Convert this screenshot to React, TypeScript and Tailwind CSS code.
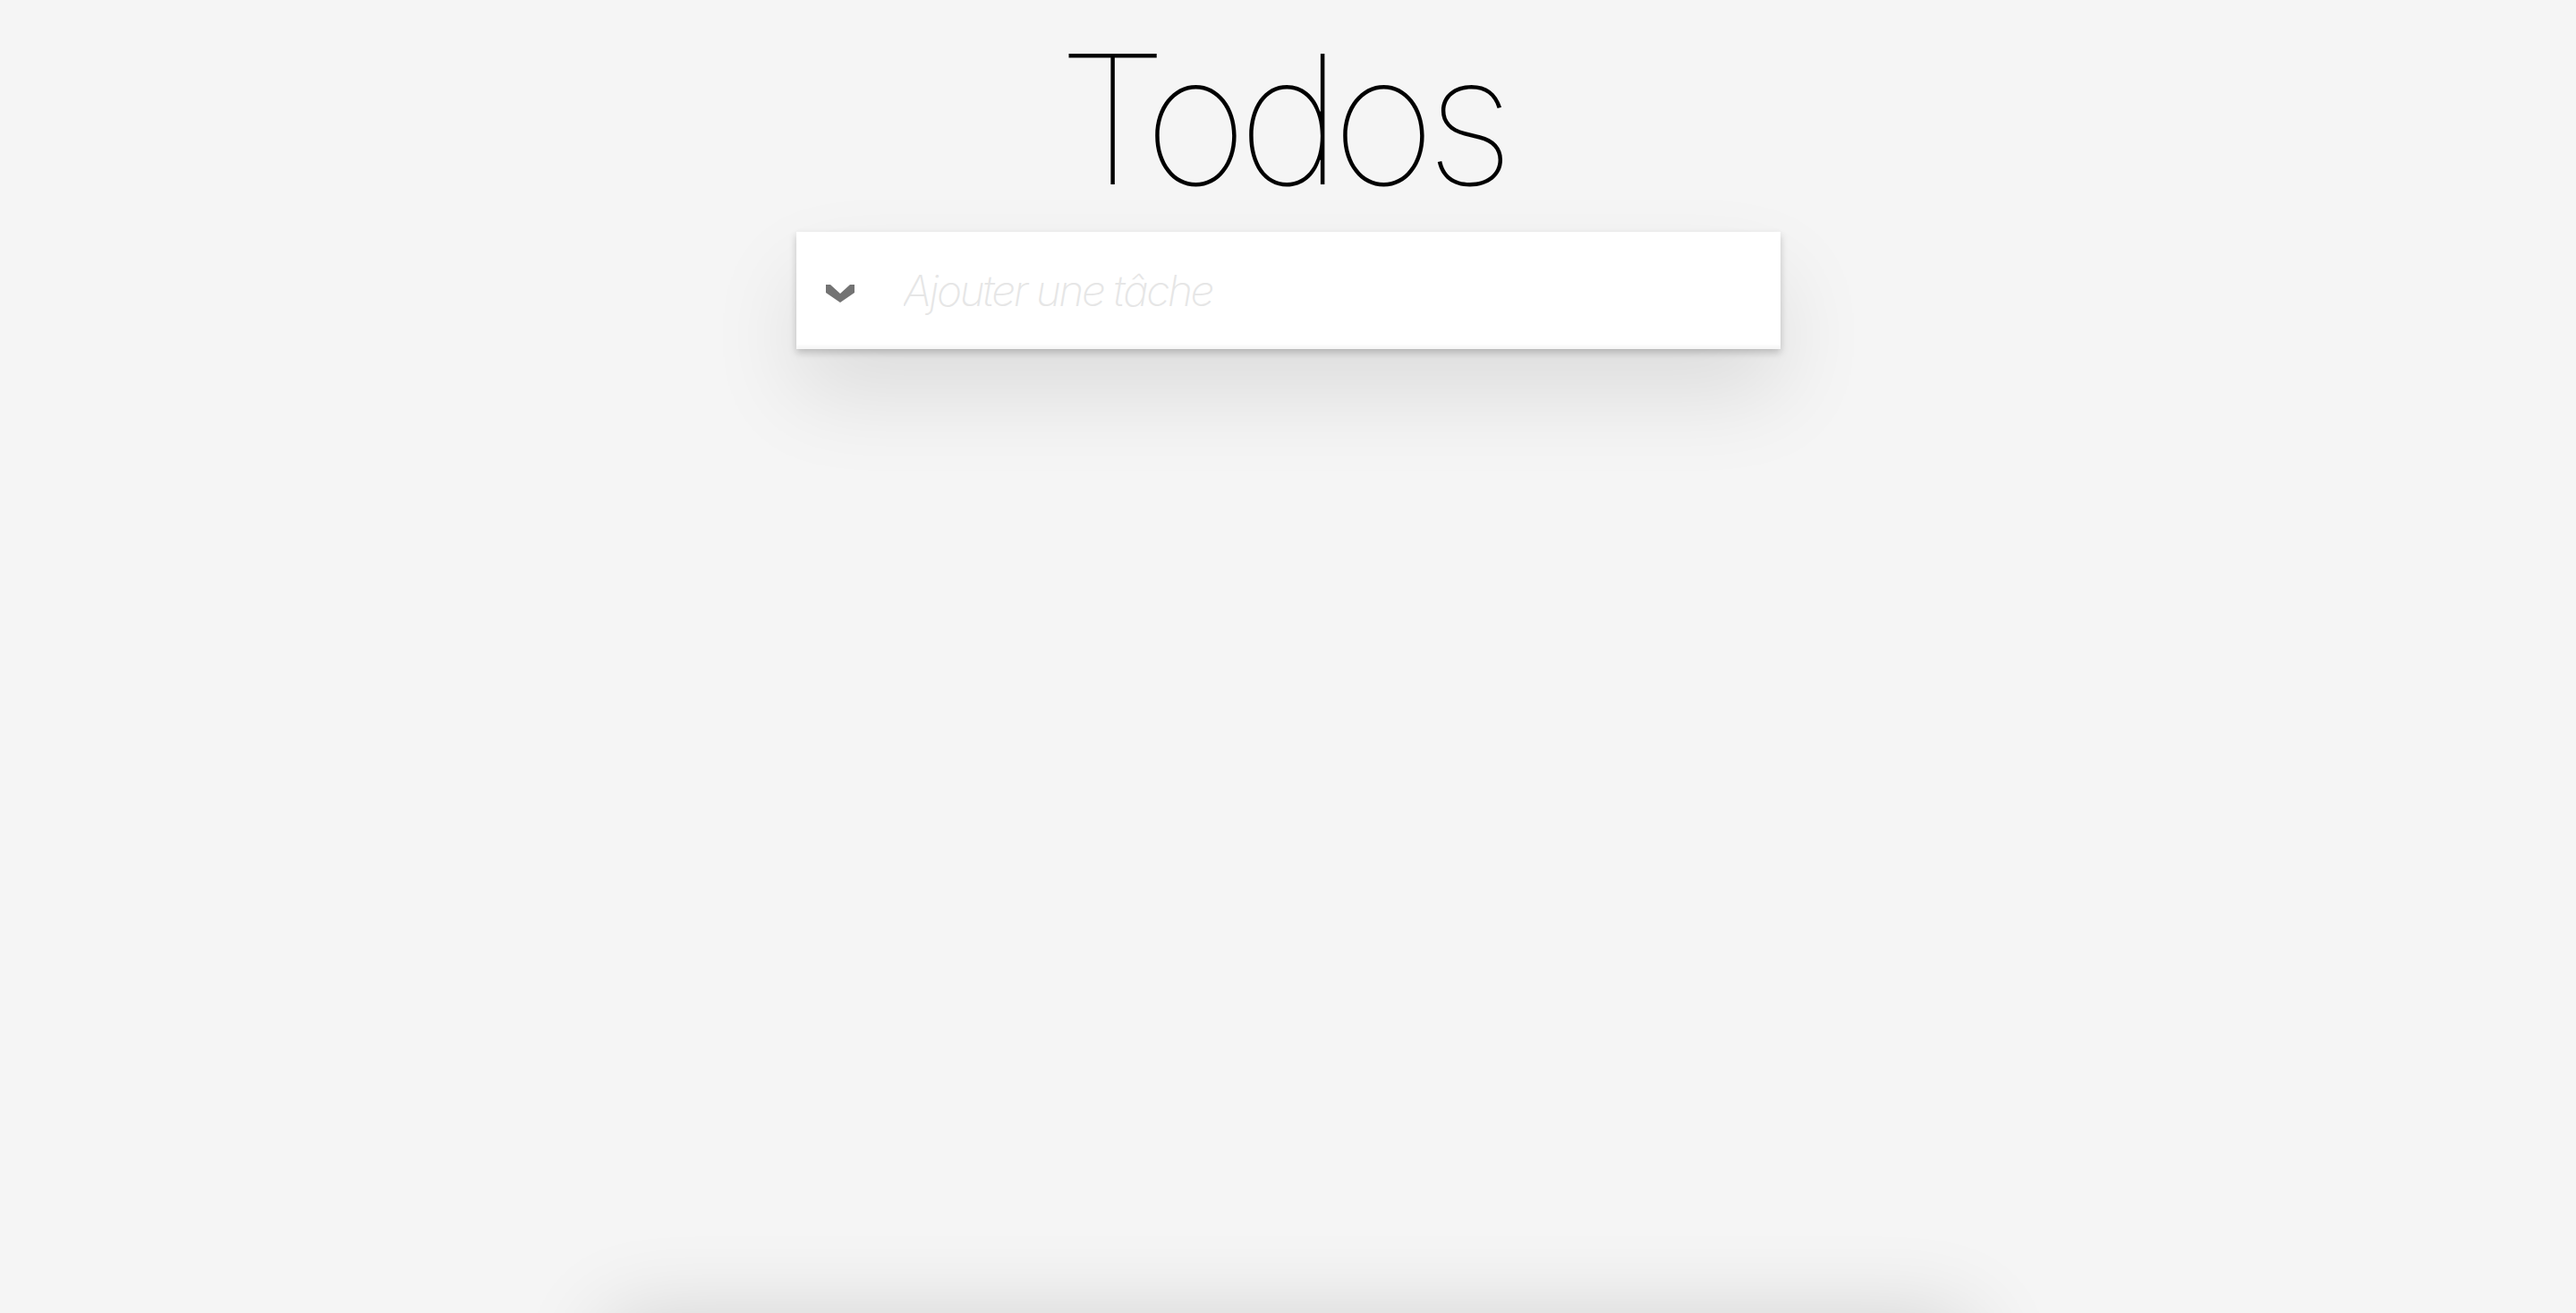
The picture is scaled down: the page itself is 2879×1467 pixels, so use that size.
import React from 'react'

const Chevron = () => (
  <svg width="32" height="20" viewBox="0 0 32 20" className="block">
    <polygon points="0,0 5,0 16,10 27,0 32,0 32,9 16,20 0,9" fill="#737373" />
  </svg>
)

const App = () => {
  return (
    <main className="h-[1467px] overflow-hidden bg-[#f5f5f5] flex flex-col items-center font-['Inter','Liberation_Sans',sans-serif]">
      <h1 className="shrink-0 pt-[33px] pr-[16px] text-[200px] leading-none font-thin text-black tracking-[-11px]">Todos</h1>

      <section className="shrink-0 mt-[26px] w-[1100px] bg-white shadow-[0_4px_8px_0_rgba(0,0,0,0.2),0_50px_100px_0_rgba(0,0,0,0.1)]">
        <header className="flex items-center h-[131px] shadow-[inset_0_-4px_2px_rgba(0,0,0,0.03)]">
          <label className="w-[120px] pl-[33px] pt-[6px] shrink-0">
            <Chevron />
          </label>
          <input
            className="flex-1 h-full pr-8 bg-transparent outline-none text-[48px] italic font-extralight tracking-[-2.5px] text-[#4d4d4d] placeholder:text-[#e6e6e6]"
            placeholder="Ajouter une tâche"
          />
        </header>
      </section>

      <div className="shrink-0 mt-[1085px] w-[1520px] h-[200px] bg-[#f5f5f5] shadow-[0_0_100px_rgba(0,0,0,0.16)]" />
    </main>
  )
}

export default App
